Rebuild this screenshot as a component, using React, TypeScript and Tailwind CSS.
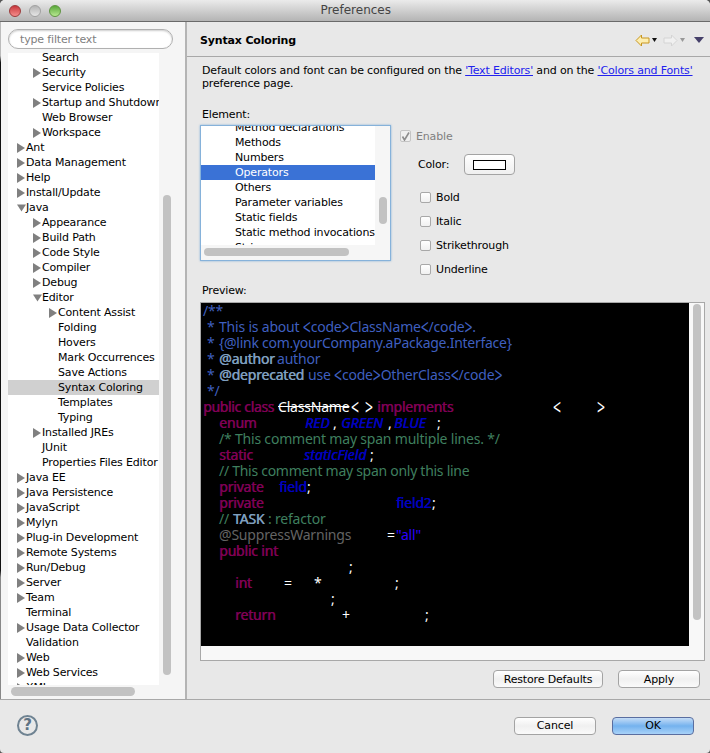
import type { ReactNode } from "react";

const ui = "font-['DejaVu_Sans',sans-serif]";
const heavy = "[text-shadow:0.5px_0_0_currentColor]";
const kw = `${heavy} text-[#7f0055]`;
const doc = "text-[#3f5fbf]";
const tag = `${heavy} text-[#7f9fbf]`;
const cm = "text-[#3f7f5f]";
const fld = `italic tracking-normal ${heavy} text-[#0000c0]`;
const op = "text-white";

type Node = { label: string; level: 0 | 1 | 2; arrow?: "closed" | "open"; selected?: boolean };

const tree: Node[] = [
  { label: "Search", level: 1 },
  { label: "Security", level: 1, arrow: "closed" },
  { label: "Service Policies", level: 1 },
  { label: "Startup and Shutdown", level: 1, arrow: "closed" },
  { label: "Web Browser", level: 1 },
  { label: "Workspace", level: 1, arrow: "closed" },
  { label: "Ant", level: 0, arrow: "closed" },
  { label: "Data Management", level: 0, arrow: "closed" },
  { label: "Help", level: 0, arrow: "closed" },
  { label: "Install/Update", level: 0, arrow: "closed" },
  { label: "Java", level: 0, arrow: "open" },
  { label: "Appearance", level: 1, arrow: "closed" },
  { label: "Build Path", level: 1, arrow: "closed" },
  { label: "Code Style", level: 1, arrow: "closed" },
  { label: "Compiler", level: 1, arrow: "closed" },
  { label: "Debug", level: 1, arrow: "closed" },
  { label: "Editor", level: 1, arrow: "open" },
  { label: "Content Assist", level: 2, arrow: "closed" },
  { label: "Folding", level: 2 },
  { label: "Hovers", level: 2 },
  { label: "Mark Occurrences", level: 2 },
  { label: "Save Actions", level: 2 },
  { label: "Syntax Coloring", level: 2, selected: true },
  { label: "Templates", level: 2 },
  { label: "Typing", level: 2 },
  { label: "Installed JREs", level: 1, arrow: "closed" },
  { label: "JUnit", level: 1 },
  { label: "Properties Files Editor", level: 1 },
  { label: "Java EE", level: 0, arrow: "closed" },
  { label: "Java Persistence", level: 0, arrow: "closed" },
  { label: "JavaScript", level: 0, arrow: "closed" },
  { label: "Mylyn", level: 0, arrow: "closed" },
  { label: "Plug-in Development", level: 0, arrow: "closed" },
  { label: "Remote Systems", level: 0, arrow: "closed" },
  { label: "Run/Debug", level: 0, arrow: "closed" },
  { label: "Server", level: 0, arrow: "closed" },
  { label: "Team", level: 0, arrow: "closed" },
  { label: "Terminal", level: 0 },
  { label: "Usage Data Collector", level: 0, arrow: "closed" },
  { label: "Validation", level: 0 },
  { label: "Web", level: 0, arrow: "closed" },
  { label: "Web Services", level: 0, arrow: "closed" },
  { label: "XML", level: 0, arrow: "closed" },
];

const indent = ["pl-[9px]", "pl-[25px]", "pl-[41px]"];

function Arrow({ dir }: { dir?: "closed" | "open" }) {
  return (
    <span className="w-[9px] shrink-0 flex items-center">
      {dir === "closed" && (
        <svg width="8" height="10" viewBox="0 0 8 10">
          <path d="M0 0L8 5L0 10Z" fill="#808080" />
        </svg>
      )}
      {dir === "open" && (
        <svg width="10" height="8" viewBox="0 0 10 8">
          <path d="M0 0H10L5 8Z" fill="#808080" />
        </svg>
      )}
    </span>
  );
}

function TreeRow({ node }: { node: Node }) {
  return (
    <div
      className={`h-[15px] flex items-center whitespace-nowrap ${indent[node.level]} ${
        node.selected ? "bg-[#d0d0d0]" : ""
      }`}
    >
      <Arrow dir={node.arrow} />
      <span>{node.label}</span>
    </div>
  );
}

function Btn({ children, className }: { children: ReactNode; className: string }) {
  return (
    <button
      className={`h-[18px] rounded-[4px] border border-[#a3a3a3] bg-gradient-to-b from-white via-[#f0f0f0] to-[#fafafa] text-[11px] text-black flex items-center justify-center ${className}`}
    >
      {children}
    </button>
  );
}

function Check({ label }: { label: string }) {
  return (
    <div className="h-[14px] flex items-center">
      <span className="w-[11px] h-[11px] rounded-[2px] border border-[#a8a8a8] bg-gradient-to-b from-white to-[#f0f0f0]" />
      <span className="ml-[5px]">{label}</span>
    </div>
  );
}

function C({ className, children }: { className?: string; children?: ReactNode }) {
  return <span className={`shrink-0 whitespace-pre ${className ?? ""}`}>{children}</span>;
}

// the angle brackets in the preview are much taller than the font's
function Lt() {
  return <span className="inline-block scale-y-150">&lt;</span>;
}

function Gt() {
  return <span className="inline-block scale-y-150">&gt;</span>;
}

function Line({ children }: { children: ReactNode }) {
  return <div className="h-4 flex leading-4">{children}</div>;
}

function Code() {
  return (
    <div className="pl-[2px] font-['Noto_Sans',sans-serif] text-[14px] tracking-[-0.2px]">
      <Line>
        <C className={doc}>/**</C>
      </Line>
      <Line>
        <C className={`ml-[4px] w-[12px] ${doc}`}>*</C>
        <C className={doc}>
          This is about <Lt />code<Gt />ClassName<Lt />/code<Gt />.
        </C>
      </Line>
      <Line>
        <C className={`ml-[4px] w-[12px] ${doc}`}>*</C>
        <C className={`tracking-[-0.27px] ${doc}`}>{"{@link com.yourCompany.aPackage.Interface}"}</C>
      </Line>
      <Line>
        <C className={`ml-[4px] w-[12px] ${doc}`}>*</C>
        <C className={`w-[58px] ${tag}`}>@author</C>
        <C className={doc}>author</C>
      </Line>
      <Line>
        <C className={`ml-[4px] w-[12px] ${doc}`}>*</C>
        <C className={`w-[89px] ${tag}`}>@deprecated</C>
        <C className={doc}>
          use <Lt />code<Gt />OtherClass<Lt />/code<Gt />
        </C>
      </Line>
      <Line>
        <C className={`ml-[4px] ${doc}`}>*/</C>
      </Line>
      <Line>
        <C className={`w-[75px] tracking-[-0.35px] ${kw}`}>public class</C>
        <C className="w-[73px] text-white line-through">ClassName</C>
        <C className={`w-[14px] ${op}`}><Lt /></C>
        <C className={`w-[12px] ${op}`}><Gt /></C>
        <C className={`w-[176px] ${kw}`}>implements</C>
        <C className={`w-[44px] ${op}`}><Lt /></C>
        <C className={op}><Gt /></C>
      </Line>
      <Line>
        <C className={`ml-[16px] w-[86px] ${kw}`}>enum</C>
        <C className={`w-[28px] ${fld}`}>RED</C>
        <C className={`w-[8px] ${op}`}>,</C>
        <C className={`w-[47px] ${fld}`}>GREEN</C>
        <C className={`w-[6px] ${op}`}>,</C>
        <C className={`w-[43px] ${fld}`}>BLUE</C>
        <C className={op}>;</C>
      </Line>
      <Line>
        <C className={`ml-[16px] ${cm}`}>/* This comment may span multiple lines. */</C>
      </Line>
      <Line>
        <C className={`ml-[16px] w-[85px] ${kw}`}>static</C>
        <C className={`w-[66px] ${fld}`}>staticField</C>
        <C className={op}>;</C>
      </Line>
      <Line>
        <C className={`ml-[16px] tracking-[-0.28px] ${cm}`}>// This comment may span only this line</C>
      </Line>
      <Line>
        <C className={`ml-[16px] w-[60px] ${kw}`}>private</C>
        <C className={`w-[28px] ${heavy} text-[#0000c0]`}>field</C>
        <C className={op}>;</C>
      </Line>
      <Line>
        <C className={`ml-[16px] w-[177px] ${kw}`}>private</C>
        <C className={`w-[36px] ${heavy} text-[#0000c0]`}>field2</C>
        <C className={op}>;</C>
      </Line>
      <Line>
        <C className={`ml-[16px] w-[14px] ${cm}`}>//</C>
        <C className={`w-[35px] ${tag}`}>TASK</C>
        <C className={cm}>: refactor</C>
      </Line>
      <Line>
        <C className="ml-[16px] w-[168px] text-[#646464]">@SuppressWarnings</C>
        <C className={`w-[9px] ${op}`}>=</C>
        <C className="text-[#2a00ff]">"all"</C>
      </Line>
      <Line>
        <C className={`ml-[16px] ${kw}`}>public int</C>
      </Line>
      <Line>
        <C className={`ml-[146px] ${op}`}>;</C>
      </Line>
      <Line>
        <C className={`ml-[32px] w-[49px] ${kw}`}>int</C>
        <C className={`w-[30px] ${op}`}>=</C>
        <C className={`w-[81px] ${op}`}>*</C>
        <C className={op}>;</C>
      </Line>
      <Line>
        <C className={`ml-[128px] ${op}`}>;</C>
      </Line>
      <Line>
        <C className={`ml-[32px] w-[107px] ${kw}`}>return</C>
        <C className={`w-[83px] ${op}`}>+</C>
        <C className={op}>;</C>
      </Line>
    </div>
  );
}

function Toolbar() {
  return (
    <div className="flex items-center mr-[6px]">
      <svg width="15" height="13" viewBox="0 0 15 13">
        <path d="M6.5 1L1 6.5L6.5 12V9H14V4H6.5Z" fill="#fdeeb0" stroke="#c8961e" />
      </svg>
      <svg className="ml-[2px]" width="5" height="4" viewBox="0 0 5 4">
        <path d="M0 0H5L2.5 4Z" fill="#111" />
      </svg>
      <svg className="ml-[6px]" width="15" height="13" viewBox="0 0 15 13">
        <path d="M8.5 1L14 6.5L8.5 12V9H1V4H8.5Z" fill="#f0f0f0" stroke="#d4d4d4" />
      </svg>
      <svg className="ml-[2px]" width="5" height="4" viewBox="0 0 5 4">
        <path d="M0 0H5L2.5 4Z" fill="#999" />
      </svg>
      <svg className="ml-[9px]" width="10" height="6" viewBox="0 0 10 6">
        <path d="M0 0H10L5 6Z" fill="#46406a" />
      </svg>
    </div>
  );
}

export default function App() {
  return (
    <div className={`w-[710px] h-[753px] overflow-hidden bg-[#555] text-[11px] leading-[15px] tracking-[-0.16px] text-black ${ui}`}>
      <div className="h-full rounded-t-[5px] rounded-b-[4px] overflow-hidden bg-[#e8e8e8] flex flex-col">
        {/* title bar */}
        <div className="h-[22px] shrink-0 flex items-center justify-between pl-[9px] border-b border-[#6a6a6a] bg-gradient-to-b from-[#ebebeb] to-[#b4b4b4]">
          <div className="flex gap-2">
            <span className="w-3 h-3 rounded-full border border-[#9c3a3a] bg-gradient-to-b from-[#c8343c] to-[#f48c8c]" />
            <span className="w-3 h-3 rounded-full border border-[#a0a0a0] bg-gradient-to-b from-[#b4b4b4] to-[#e6e6e6]" />
            <span className="w-3 h-3 rounded-full border border-[#5e9440] bg-gradient-to-b from-[#58a838] to-[#b8e890]" />
          </div>
          <span className="mr-[319px] text-[12px] tracking-normal text-[#444]">Preferences</span>
        </div>

        {/* main */}
        <div className="h-[678px] shrink-0 flex border-b border-[#a8a8a8]">
          <div className="w-px shrink-0 bg-[linear-gradient(#bbb_0,#bbb_5%,#111_6%,#111_81%,#888_82%)]" />
          {/* left side */}
          <div className="w-[186px] shrink-0 border-r-2 border-r-[#b4b4b4] bg-[#f5f5f5] flex flex-col">
            <div className="pl-[7px] pt-[7px] pb-[4px]">
              <div className="w-[165px] h-[20px] rounded-full border border-[#b0b0b0] bg-white shadow-[inset_0_1px_2px_rgba(0,0,0,0.2)] pl-[11px] flex items-center text-[#808080]">
                type filter text
              </div>
            </div>
            <div className="flex pl-[7px] h-[632px]">
              <div className="w-[151px] h-[632px] overflow-hidden bg-white">
                <div className="-mt-[3px]">
                  {tree.map((n) => (
                    <TreeRow key={n.label} node={n} />
                  ))}
                </div>
              </div>
              <div className="pl-[4px] pt-[142px]">
                <div className="w-[8px] h-[480px] rounded-full bg-[#c2c2c2]" />
              </div>
            </div>
            <div className="pl-[10px] pt-[2px]">
              <div className="w-[124px] h-[9px] rounded-full bg-[#c2c2c2]" />
            </div>
          </div>

          {/* right side */}
          <div className="flex-1 flex flex-col min-w-0">
            <div className="h-[35px] shrink-0 border-b border-[#a8a8a8] flex items-center justify-between pl-[13px] pt-[2px]">
              <span className="font-bold">Syntax Coloring</span>
              <Toolbar />
            </div>
            <div className="pl-[2px]">
              <div className="pl-[13px] pt-[7px] leading-[13px]">
                <p>
                  Default colors and font can be configured on the{" "}
                  <span className="text-[#2222ee] underline">'Text Editors'</span> and on the{" "}
                  <span className="text-[#2222ee] underline">'Colors and Fonts'</span>
                  <br />
                  preference page.
                </p>
              </div>
              <div className="pl-[13px] mt-[17px]">Element:</div>
              <div className="flex mt-[3px] pl-[11px] h-[151px]">
                <div className="w-[191px] h-[136px] border border-[#86b2da] shadow-[0_0_2px_#86b2da] bg-[#f6f6f6] overflow-hidden">
                  <div className="flex h-[119px]">
                    <div className="w-[174px] overflow-hidden bg-white">
                      <div className="-mt-[6px]">
                        {[
                          "Method declarations",
                          "Methods",
                          "Numbers",
                          "Operators",
                          "Others",
                          "Parameter variables",
                          "Static fields",
                          "Static method invocations",
                          "Strings",
                        ].map((t) => (
                          <div
                            key={t}
                            className={`h-[15px] pl-[34px] whitespace-nowrap ${
                              t === "Operators" ? "bg-[#3a72d6] text-white" : ""
                            }`}
                          >
                            {t}
                          </div>
                        ))}
                      </div>
                    </div>
                    <div className="pl-[4px] pt-[71px]">
                      <div className="w-[8px] h-[27px] rounded-full bg-[#c2c2c2]" />
                    </div>
                  </div>
                  <div className="pl-[3px] pt-[3px]">
                    <div className="w-[145px] h-[8px] rounded-full bg-[#c2c2c2]" />
                  </div>
                </div>
                <div className="pl-[9px] pt-[4px]">
                  <div className="h-[14px] flex items-center text-[#7f7f7f]">
                    <span className="w-[11px] h-[12px] rounded-[2px] border border-[#c4c4c4] bg-[#efefef] flex items-center justify-center">
                      <svg width="9" height="9" viewBox="0 0 9 9">
                        <path d="M1.5 4.5L3.5 8L8 0.5" fill="none" stroke="#8c8c8c" strokeWidth="1.6" />
                      </svg>
                    </span>
                    <span className="ml-[5px]">Enable</span>
                  </div>
                  <div className="pl-[18px] mt-[11px] flex items-center">
                    <span>Color:</span>
                    <button className="ml-[15px] w-[51px] h-[21px] rounded-[4px] border border-[#a3a3a3] bg-gradient-to-b from-white to-[#efefef] flex items-center justify-center">
                      <span className="w-[33px] h-[10px] border border-black bg-white" />
                    </button>
                  </div>
                  <div className="pl-[20px] mt-[15px] flex flex-col gap-[10px]">
                    <Check label="Bold" />
                    <Check label="Italic" />
                    <Check label="Strikethrough" />
                    <Check label="Underline" />
                  </div>
                </div>
              </div>
              <div className="pl-[13px] mt-[7px]">Preview:</div>
              <div className="ml-[11px] mt-[4px] w-[505px] h-[359px] border border-[#a8a8a8] bg-[#f8f8f8] flex items-start">
                <div className="w-[488px] h-[343px] bg-black">
                  <Code />
                </div>
                <div className="pl-[4px] pt-[1px]">
                  <div className="w-[8px] h-[316px] rounded-full bg-[#c2c2c2]" />
                </div>
              </div>
              <div className="mt-[9px] pl-[304px] flex gap-[15px]">
                <Btn className="w-[110px]">Restore Defaults</Btn>
                <Btn className="w-[82px]">Apply</Btn>
              </div>
            </div>
          </div>
        </div>

        {/* footer */}
        <div className="flex-1 flex items-center pl-[17px] pr-[16px] pb-[2px]">
          <div className="w-[21px] h-[21px] rounded-full border-2 border-[#6f8392] flex items-center justify-center text-[15px] font-bold text-[#5f7384]">
            ?
          </div>
          <div className="ml-auto flex gap-[16px]">
            <Btn className="w-[82px]">Cancel</Btn>
            <Btn className="w-[82px] !border-[#5a6ea0] !from-[#c4dcf6] !via-[#74b2ee] !to-[#a8d2f8]">OK</Btn>
          </div>
        </div>
      </div>
    </div>
  );
}
